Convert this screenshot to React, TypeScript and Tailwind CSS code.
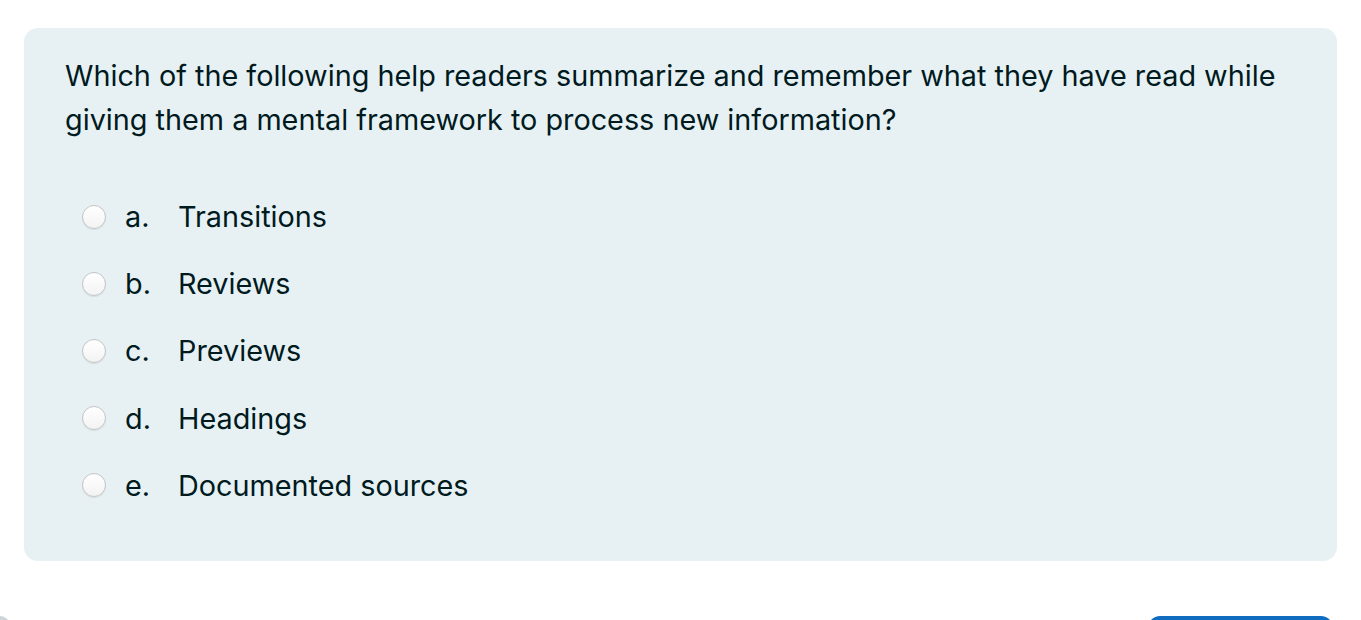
import { useState } from "react";

const options = [
  { key: "a", label: "Transitions" },
  { key: "b", label: "Reviews" },
  { key: "c", label: "Previews" },
  { key: "d", label: "Headings" },
  { key: "e", label: "Documented sources" },
];

function Radio({ checked }: { checked: boolean }) {
  return (
    <span className="flex items-center justify-center w-[24px] h-[24px] rounded-full border border-[#c4c4c4] bg-gradient-to-b from-white to-[#f3f3f3] shadow-[0_1px_1px_rgba(0,0,0,0.08)] shrink-0">
      {checked && <span className="w-[10px] h-[10px] rounded-full bg-[#0f6cbf]" />}
    </span>
  );
}

export default function App() {
  const [picked, setPicked] = useState<string | null>(null);
  return (
    <div className="bg-white w-full h-[620px] flex flex-col font-['Inter',sans-serif] text-[#001a1e] overflow-hidden">
      <div className="pt-[28px] px-[24px]">
        {/* Question card */}
        <div className="bg-[#e7f1f4] rounded-[14px] pl-[41px] pr-[40px] pt-[26px] pb-[42px]">
          <p className="text-[28.8px] leading-[44px]">
            Which of the following help readers summarize and remember what they have read while giving them a mental framework to process new information?
          </p>
          <div className="flex flex-col mt-[41px] pl-[17px]">
            {options.map((o) => (
              <label key={o.key} className="flex items-center h-[67.2px] cursor-pointer" onClick={() => setPicked(o.key)}>
                <Radio checked={picked === o.key} />
                <span className="text-[28.8px] ml-[19px] w-[53px]">{o.key}.</span>
                <span className="text-[28.8px]">{o.label}</span>
              </label>
            ))}
          </div>
        </div>
      </div>

      {/* Footer buttons */}
      <div className="flex justify-between items-start mt-[55px] pr-[28px]">
        <div className="w-[10px] h-[40px] bg-[#ced4da] rounded-r-[10px]" />
        <div className="w-[185px] h-[40px] bg-[#0f6cbf] rounded-[12px]" />
      </div>
    </div>
  );
}
